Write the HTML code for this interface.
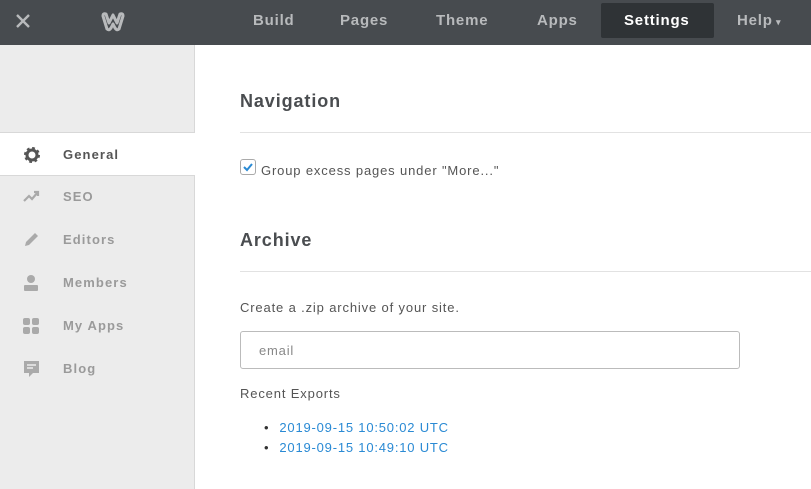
<!DOCTYPE html>
<html><head><style>
*{margin:0;padding:0;box-sizing:border-box}
body{width:811px;height:489px;overflow:hidden;font-family:"Liberation Sans",sans-serif;background:#fff;position:relative}
.top{position:absolute;left:0;top:0;width:811px;height:45px;background:#474b4f}
.nav{position:absolute;top:0;height:45px;line-height:42px;color:#b8babc;font-weight:bold;font-size:15px;letter-spacing:.8px}
.side{position:absolute;left:0;top:45px;width:195px;height:444px;background:#ececec;border-right:1px solid #d8d8d8}
.item{position:absolute;left:0;width:195px;height:43px;font-size:13px;font-weight:bold;color:#9a9a9a;line-height:43px;padding-left:63px;letter-spacing:1.1px}
.ic{position:absolute;left:23px;top:13px}
h2{position:absolute;left:240px;font-size:18px;font-weight:bold;color:#4a4d50;letter-spacing:.9px}
.hr{position:absolute;left:240px;width:571px;height:1px;background:#e2e2e2}
.t{position:absolute;left:240px;font-size:13px;color:#555;letter-spacing:.85px}
a{color:#2a8ad4;text-decoration:none}
</style></head><body>
<div class="top"></div>
<svg style="position:absolute;left:15px;top:13px" width="16" height="16"><path d="M2 2L14 14M14 2L2 14" stroke="#b8babc" stroke-width="2.4"/></svg>
<svg style="position:absolute;left:100px;top:11px" width="26" height="22"><path d="M3 5Q3 2 6 3L9 12L13 4L17 12L20 3Q23 2 23 5L19 18Q17 20 15 17L13 13L11 17Q9 20 7 18Z" fill="none" stroke="#b8babc" stroke-width="3" stroke-linejoin="round"/></svg>
<div class="nav" style="left:253px">Build</div>
<div class="nav" style="left:340px">Pages</div>
<div class="nav" style="left:436px">Theme</div>
<div class="nav" style="left:537px">Apps</div>
<div style="position:absolute;left:601px;top:3px;width:113px;height:35px;background:#2f3336;border-radius:2px"></div>
<div class="nav" style="left:624px;color:#fff">Settings</div>
<div class="nav" style="left:737px">Help<span style="font-size:9px"> ▾</span></div>
<div class="side"></div>
<div class="item" style="top:132px;background:#fff;color:#555;border-top:1px solid #d8d8d8;border-bottom:1px solid #d8d8d8;height:44px">
<svg class="ic" width="18" height="18" viewBox="0 0 18 18"><circle cx="9" cy="9" r="6" fill="none" stroke="#555" stroke-width="4" stroke-dasharray="2.4 2.3"/><circle cx="9" cy="9" r="5" fill="none" stroke="#555" stroke-width="3"/></svg>General</div>
<div class="item" style="top:175px"><svg class="ic" width="18" height="16"><path d="M1 13L6 8L9 11L15 4M11 4H15V8" fill="none" stroke="#aaa" stroke-width="2.2"/></svg>SEO</div>
<div class="item" style="top:218px"><svg class="ic" width="18" height="16"><path d="M2 15L3 11L12 2L15 5L6 14Z" fill="#aaa"/></svg>Editors</div>
<div class="item" style="top:261px"><svg class="ic" width="18" height="18"><circle cx="8" cy="5" r="4" fill="#aaa"/><rect x="1" y="11" width="14" height="6" rx="1" fill="#aaa"/></svg>Members</div>
<div class="item" style="top:304px"><svg class="ic" width="18" height="18"><rect x="0" y="1" width="7" height="7" rx="2" fill="#aaa"/><rect x="9" y="1" width="7" height="7" rx="2" fill="#aaa"/><rect x="0" y="10" width="7" height="7" rx="2" fill="#aaa"/><rect x="9" y="10" width="7" height="7" rx="2" fill="#aaa"/></svg>My Apps</div>
<div class="item" style="top:347px"><svg class="ic" width="18" height="20"><path d="M1 1H16V13H10L6 17V13H1Z" fill="#aaa"/><path d="M4 5H13M4 8H10" stroke="#ececec" stroke-width="1.5"/></svg>Blog</div>
<h2 style="top:91px">Navigation</h2>
<div class="hr" style="top:132px"></div>
<div style="position:absolute;left:240px;top:159px;width:16px;height:16px;border:1px solid #aaa;border-radius:3px;background:#fff"><svg width="14" height="14"><path d="M3 7L6 10L11 4" fill="none" stroke="#2a8ad4" stroke-width="2"/></svg></div>
<div class="t" style="left:261px;top:163px">Group excess pages under "More..."</div>
<h2 style="top:230px">Archive</h2>
<div class="hr" style="top:271px"></div>
<div class="t" style="top:300px">Create a .zip archive of your site.</div>
<div style="position:absolute;left:240px;top:331px;width:500px;height:38px;border:1px solid #bbb;border-radius:3px;font-size:13px;color:#888;line-height:38px;padding-left:18px;letter-spacing:.8px">email</div>
<div class="t" style="top:386px">Recent Exports</div>
<div class="t" style="left:264px;top:420px;color:#333;letter-spacing:0">•&nbsp;&nbsp;&nbsp;<a style="letter-spacing:.8px">2019-09-15 10:50:02 UTC</a></div>
<div class="t" style="left:264px;top:440px;color:#333;letter-spacing:0">•&nbsp;&nbsp;&nbsp;<a style="letter-spacing:.8px">2019-09-15 10:49:10 UTC</a></div>
</body></html>
